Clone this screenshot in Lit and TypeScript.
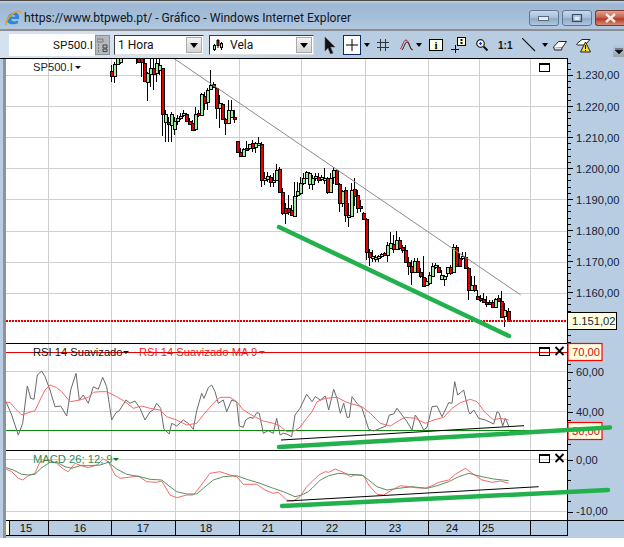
import { LitElement, html, css, svg } from "lit";
import { customElement } from "lit/decorators.js";

type C = [number, number, number, number, number, string];
// Candles measured on the reference: x, wick top, wick bottom, body top, body bottom, colour
const A: C[] = [[34,30,82,48,62,"r"],[43,20,82,28,62,"g"],[52,5,30,5,28,"g"],[61,5,25,5,22,"g"],[107,-30,28,-30,-5,"g"],[115,-30,20,-30,20,"r"],[124,-30,65,-30,22,"r"],[133,-30,75,25,78,"r"],[142,50,138,55,80,"g"],[151,-30,95,40,58,"g"],[160,-30,105,38,58,"r"],[169,-30,80,25,55,"g"],[178,-30,60,30,45,"g"],[187,40,245,40,178,"r"],[196,165,260,178,200,"g"],[205,185,260,200,208,"r"],[214,170,260,178,210,"g"],[223,185,238,198,222,"g"],[232,180,210,190,198,"g"],[241,175,195,182,190,"g"],[250,165,185,175,180,"g"],[259,175,200,178,198,"r"],[268,190,210,198,208,"r"],[277,195,228,205,225,"r"],[286,155,228,178,222,"g"],[295,165,185,175,180,"r"],[304,115,180,118,180,"g"],[313,110,165,122,145,"r"],[322,100,165,105,142,"g"],[331,45,105,90,102,"g"],[340,82,100,88,95,"r"],[349,95,190,100,158,"r"],[358,120,218,145,158,"g"],[367,145,195,148,192,"r"],[376,190,242,193,205,"r"],[385,135,208,165,205,"g"],[394,135,188,165,185,"g"],[403,165,203,185,193,"r"],[412,258,290,258,290,"r"],[421,280,302,292,302,"r"],[430,278,305,282,303,"g"],[439,258,285,278,283,"r"],[448,270,285,268,278,"g"],[457,255,290,265,278,"r"],[466,262,295,265,275,"g"],[475,245,270,265,270,"g"],[484,262,398,268,375,"r"],[493,350,390,368,374,"g"],[502,350,380,362,372,"g"],[511,360,395,365,382,"r"],[520,355,398,375,380,"g"],[529,328,375,345,375,"g"],[538,335,410,343,412,"r"],[547,400,480,412,475,"r"],[556,445,507,458,475,"r"],[565,420,480,458,470,"r"],[574,450,482,465,480,"r"],[583,380,485,422,482,"g"],[592,380,425,408,420,"g"],[601,365,420,385,415,"g"],[610,355,390,370,385,"g"],[619,348,370,352,368,"g"],[628,350,400,354,388,"g"],[637,360,405,368,388,"g"],[646,355,378,362,370,"g"],[655,355,385,365,375,"r"],[664,360,378,366,372,"g"],[673,338,385,368,372,"g"],[682,365,415,368,410,"r"],[691,355,415,368,412,"g"],[700,335,385,345,365,"g"],[709,342,390,346,388,"r"],[718,385,472,388,445,"r"],[727,405,455,408,445,"g"],[736,395,500,404,480,"r"]];
const B: C[] = [[54,100,172,135,140,"g"],[63,40,140,60,138,"g"],[72,25,110,58,78,"r"],[81,60,130,75,115,"r"],[90,90,125,108,115,"r"],[99,125,150,128,148,"r"],[108,145,270,148,245,"r"],[117,238,290,245,260,"r"],[126,240,275,258,265,"g"],[135,255,275,260,265,"g"],[144,255,275,258,265,"g"],[153,250,265,252,258,"g"],[162,245,258,250,256,"r"],[171,215,275,225,255,"g"],[180,185,235,218,235,"g"],[189,195,250,222,238,"r"],[198,183,240,210,238,"g"],[207,200,238,210,235,"r"],[216,225,248,232,240,"r"],[225,225,275,240,275,"r"],[234,260,315,275,288,"r"],[243,270,345,288,305,"r"],[252,265,310,272,305,"g"],[261,265,310,272,305,"r"],[270,295,325,306,318,"r"],[279,258,350,322,348,"r"],[288,325,350,332,345,"g"],[297,305,345,315,340,"g"],[306,280,320,288,318,"g"],[315,278,295,285,292,"g"],[324,285,310,290,305,"r"],[333,300,325,315,328,"g"],[342,315,348,318,328,"g"],[351,290,320,292,310,"g"],[360,285,315,292,308,"r"],[369,222,305,232,305,"g"],[378,225,290,232,288,"r"],[387,250,290,265,288,"r"],[396,245,270,258,265,"g"],[405,245,295,260,295,"r"],[414,290,390,295,360,"r"],[423,318,360,345,360,"g"],[432,318,365,345,360,"r"],[441,360,390,378,388,"r"],[450,375,395,385,390,"r"],[459,370,395,388,395,"r"],[468,378,410,395,402,"r"],[477,390,405,397,402,"r"],[486,390,415,397,410,"r"],[495,385,415,388,410,"g"],[504,375,395,385,392,"r"],[513,362,440,392,440,"r"],[522,400,472,420,438,"g"],[535,415,455,423,452,"r"]];

const candles: C[] = [
  ...A.map((c): C => [100 + c[0] / 3, 55 + c[1] / 3, 55 + c[2] / 3, 55 + c[3] / 3, 55 + c[4] / 3, c[5]]),
  ...B.map((c): C => [330 + c[0] / 3, 170 + c[1] / 3, 170 + c[2] / 3, 170 + c[3] / 3, 170 + c[4] / 3, c[5]]),
];

const path = (base: number, left: number[], right: number[]) => {
  const out: string[] = [];
  for (let i = 0; i < left.length; i += 2) out.push(`${(left[i] / 3).toFixed(1)},${(base + left[i + 1] / 3).toFixed(1)}`);
  for (let i = 0; i < right.length; i += 2) out.push(`${(312 + right[i] / 3).toFixed(1)},${(base + right[i + 1] / 3).toFixed(1)}`);
  return out.join(" ");
};

const rsi = path(340,
  [18,185,35,225,55,285,68,250,82,138,92,175,102,178,112,105,125,93,135,110,150,150,165,200,182,198,200,228,212,150,228,100,238,180,250,165,265,190,280,140,295,148,308,112,320,140,335,240,348,218,358,212,378,180,390,190,405,183,420,205,435,240,450,215,460,210,470,190,482,205,492,268,508,282,515,250,530,258,550,240,565,250,580,268,590,212,605,160,612,175,625,143,635,135,645,155,655,190,670,180,680,215,695,180,710,185,718,258,730,262,737,240,750,232,760,235,770,218,778,220,790,280,805,272,820,280,830,235,840,285,850,280,860,282,875,290,885,225,900,205,920,163],
  [0,185,10,170,25,180,40,168,50,210,65,148,75,175,85,220,95,190,105,232,112,232,120,170,135,190,150,205,160,235,170,268,185,273,205,265,222,258,232,225,245,222,255,205,270,225,285,245,300,270,310,225,320,240,335,270,345,262,360,200,375,198,390,230,410,188,420,190,428,125,437,165,455,150,470,215,475,222,485,210,500,235,520,240,545,252,555,215,562,220,572,258,580,235,590,258]);
const rsiMa = path(340,
  [18,187,30,187,45,205,65,225,85,218,105,212,120,180,135,150,150,135,170,143,185,155,210,185,240,180,265,172,280,157,300,155,320,155,350,170,375,185,400,205,425,198,450,205,480,210,500,230,530,240,560,255,590,250,610,225,640,190,660,172,690,172,710,185,730,210,760,228,790,243,820,250,840,258,860,275,880,275,900,262,920,235],
  [0,215,15,185,40,175,75,172,100,185,120,192,150,200,175,220,205,250,235,258,260,242,280,232,310,235,340,250,365,240,395,232,420,205,445,188,475,178,495,185,520,218,545,240,565,235,590,240]);
const macd = path(445,
  [18,72,35,80,55,100,68,105,85,92,105,85,120,50,145,45,170,55,190,72,205,80,225,55,245,62,265,68,290,60,310,42,325,50,345,90,360,100,385,97,415,93,440,110,470,112,485,108,510,150,530,158,560,150,580,150,600,125,630,85,660,80,690,90,710,95,730,118,770,118,795,135,820,145,835,142,860,165,880,168,900,155,920,125],
  [0,110,20,90,40,80,50,82,70,72,85,78,100,85,115,95,130,90,155,92,170,120,195,148,215,150,240,135,265,122,290,125,310,128,340,130,360,122,380,112,410,105,430,88,460,70,480,85,510,105,540,112,565,108,590,115]);
const macdSig = path(445,
  [18,68,40,75,65,88,85,90,105,88,125,68,150,52,170,52,195,65,215,70,240,62,270,62,300,60,325,52,350,72,380,88,420,95,450,103,485,105,510,125,530,140,560,147,590,147,610,130,640,105,670,95,710,92,740,103,780,115,820,130,850,140,885,155,905,150,925,140],
  [0,130,25,105,50,92,80,85,110,88,150,90,170,105,195,125,225,135,260,130,300,125,345,130,375,122,410,110,440,95,470,85,510,95,545,102,590,107]);

const VGRID = [48, 111, 175, 239, 301, 365, 428, 479, 530];
const PRICES: [string, number][] = [["1.230,00", 75], ["1.220,00", 106.5], ["1.210,00", 137.5], ["1.200,00", 168.5], ["1.190,00", 199.5], ["1.180,00", 231], ["1.170,00", 262], ["1.160,00", 293]];
const DATES: [string, number][] = [["15", 26], ["16", 80], ["17", 143], ["18", 206], ["21", 268], ["22", 332], ["23", 395], ["24", 452], ["25", 488]];

function ticks(from: number, to: number, start: number, step: number, major: number) {
  const out: unknown[] = [];
  const n0 = Math.ceil((from - start) / step);
  for (let n = n0; start + n * step < to; n++) {
    const y = Math.round(start + n * step) + 0.5;
    const len = ((n % major) + major) % major === 0 ? 5 : 3;
    out.push(svg`<line x1="568" x2=${568 + len} y1=${y} y2=${y} class="k"></line>`);
  }
  return out;
}

@customElement("app-root")
export class AppRoot extends LitElement {
  static styles = css`
    :host { display: block; width: 624px; height: 547px; background: #fff; overflow: hidden; font-family: "Liberation Sans", Arial, sans-serif; }
    .window { height: 538px; display: flex; flex-direction: column; background: #b8cde2; }
    .title { height: 31px; box-sizing: border-box; flex: none; display: flex; align-items: center; gap: 3px; padding: 5px 0 0 5px;
      border-top: 1px solid #4a4a4a; background: linear-gradient(#c6d3df 0, #9db7d4 3px, #a6bfda 18px, #b2c8df 100%);
      border-bottom: 2px solid #8b8f94; position: relative; }
    .title span { font: 12.15px Roboto, "Open Sans", sans-serif; color: #10161e; white-space: nowrap; }
    .ctrls { margin-left: auto; display: flex; gap: 3px; align-self: flex-start; margin-top: 4px; }
    .cb { width: 30px; height: 16px; box-sizing: border-box; border: 1px solid #5d7897; border-radius: 3px;
      background: linear-gradient(#c9d9ea, #a6bdd7 50%, #8fa9c7 55%, #b1c6dd); display: flex; align-items: center; justify-content: center; }
    .cb.close { width: 29px; border-color: #7a3b34; border-right: 0; border-radius: 3px 0 0 3px; background: linear-gradient(#e3a08f, #c65a48 50%, #b03a2a 55%, #d88a74); }
    .toolbar { height: 27px; flex: none; display: flex; align-items: stretch; padding: 2px 0 0 5px; box-sizing: border-box; border-left: 0;
      background: linear-gradient(90deg, #d5e1ee 0, #d5e1ee 200px, #b9cde2 320px); }
    .sym { width: 86px; margin: 1px 0 0 4px; height: 22px; background: #fff; font: 11.6px Roboto, sans-serif; color: #111; text-align: right; line-height: 22px; padding-right: 2px; box-sizing: border-box; }
    .symbtn { width: 15px; height: 20px; margin-top: 2px; background: #b5b9bd; border: 1px solid #8d9298; box-sizing: border-box; display: flex; align-items: center; justify-content: center; }
    .combo { height: 20px; margin: 2px 0 0 4px; border: 1px solid #3b3b3b; border-right-color: #ddd; border-bottom-color: #ddd; background: #fff; display: flex; align-items: center; box-sizing: border-box; font: 12px Roboto, sans-serif; color: #111; padding-left: 3px; gap: 7px; position: relative; }
    .combo.a { width: 90px; }
    .combo.b { width: 105px; margin-left: 5px; }
    .arrow { margin-left: auto; width: 16px; height: 16px; background: linear-gradient(#f4f4f4, #d4d4d4); border: 1px solid #aaa; box-sizing: border-box; display: flex; align-items: center; justify-content: center; margin-right: 1px; }
    .tools { display: flex; align-items: center; margin-left: 10px; height: 24px; position: relative; flex: 1; }
    .tools svg { display: block; flex: none; }
    .over { margin-left: auto; width: 11px; height: 24px; align-self: flex-start; background: linear-gradient(#b9cde2 45%, #9ea6ae); display: flex; align-items: flex-end; justify-content: center; padding-bottom: 3px; box-sizing: border-box; }
    .chart { display: block; width: 624px; height: 480px; flex: none; }
    .cross { width: 18px; height: 20px; border: 1px solid #0a2a6a; background: #fff; box-sizing: border-box; display: flex; align-items: center; justify-content: center; margin: 0 3px 0 8px; }
    .info { width: 14px; height: 12px; background: #ffffe1; border: 1px solid #000; box-sizing: border-box; font: bold 11px/10px "Liberation Serif", serif; text-align: center; color: #000; margin: 0 8px 0 7px; }
    .one { font: bold 10px "Liberation Sans", sans-serif; color: #111; margin: 0 10px 0 10px; }
    .ml3 { margin-left: 3px; } .ml5 { margin-left: 5px; } .ml6 { margin-left: 6px; } .ml7 { margin-left: 7px; } .ml9 { margin-left: 9px; } .ml10 { margin-left: 10px; } .ml11 { margin-left: 11px; }
    .k { stroke: #000; stroke-width: 1; shape-rendering: crispEdges; }
    .g { stroke: #cfcfcf; stroke-width: 1; shape-rendering: crispEdges; }
    .lbl { font: 11.2px "Liberation Sans", Arial, sans-serif; fill: #15233a; }
    .hdr { font: 11.2px "Liberation Sans", Arial, sans-serif; }
    .trend { stroke-width: 4.500; stroke: #22b14c; stroke-linecap: round; fill: none; }
    .crv { fill: none; stroke-width: 1; }
  `;

  private gridV(y1: number, y2: number) {
    return VGRID.map((x) => svg`<line class="g" x1=${x + 0.5} x2=${x + 0.5} y1=${y1} y2=${y2}></line>`);
  }
  private gridH(ys: number[]) {
    return ys.map((y) => svg`<line class="g" x1="6" x2="567" y1=${y + 0.5} y2=${y + 0.5}></line>`);
  }
  private winBox(y: number) {
    return svg`<rect x="539.5" y=${y + 0.5} width="10" height="8" fill="none" stroke="#000" shape-rendering="crispEdges"></rect>
      <line x1="539" x2="550" y1=${y + 1.5} y2=${y + 1.5} class="k"></line>`;
  }
  private closeX(y: number) {
    return svg`<path d="M555.5 ${y} l8 8 M563.5 ${y} l-8 8" stroke="#000" stroke-width="1.8" fill="none"></path>`;
  }
  private candles() {
    return candles.map(([x, wt, wb, bt, bb, col]) => {
      const cx = Math.round(x);
      const t = Math.round(bt);
      const h = Math.max(2, Math.round(bb) - t);
      return svg`<rect x=${cx} y=${Math.round(wt)} width="1" height=${Math.max(1, Math.round(wb - wt))} fill="#000"></rect>
        <rect x=${cx - 1} y=${t} width="4" height=${h + 1} fill="#000"></rect>
        <rect x=${cx} y=${t + 1} width="2" height=${h - 1} fill=${col === "r" ? "#e80000" : "#9bec9b"}></rect>`;
    });
  }

  render() {
    return html`<div class="window">
      <div class="title">
        <svg width="16" height="16" viewBox="0 0 16 16">
          <path d="M2 10.500C2 5 6.500 2 10.500 2.500c3.500.5 4 4.500 3.500 6.500H6.200c.2 2.800 4 3.300 6.800 1.200v3C8 15.500 2 14 2 10.500z M6.200 6.700h4.200C10.200 4.300 6.800 4.300 6.200 6.700z" fill="#2b86dc" fill-rule="evenodd"></path>
          <path d="M1.200 15C-.5 12.500 5 4 11 1.800c3-1 4.800-1 4.400 1.500" fill="none" stroke="#e6a21e" stroke-width="1.600"></path>
        </svg>
        <span>https://www.btpweb.pt/ - Gráfico - Windows Internet Explorer</span>
        <div class="ctrls">
          <div class="cb"><svg width="12" height="6"><rect x=".5" y="1.5" width="10" height="4" fill="#e4ebf3" stroke="#5a6b80"></rect></svg></div>
          <div class="cb"><svg width="12" height="9"><rect x="1.5" y=".5" width="9" height="7" fill="none" stroke="#3e5068" stroke-width="1.2"></rect><rect x="3.5" y="3" width="5" height="3" fill="#e4ebf3"></rect></svg></div>
          <div class="cb close"><svg width="13" height="10"><path d="M2 1l9 8M11 1L2 9" stroke="#f2ecea" stroke-width="2.4"></path></svg></div>
        </div>
      </div>
      <div class="toolbar">
        <div class="sym">SP500.I</div>
        <div class="symbtn"><svg width="11" height="14" viewBox="0 0 11 14"><path d="M0 1h6v3H0z" fill="none" stroke="#777"></path><path d="M1 7h1M1 10h1M1 13h1M6 7h4v3H6zM6 11h4v2.5H6z" fill="none" stroke="#444"></path></svg></div>
        <div class="combo a">1 Hora<div class="arrow"><svg width="8" height="5"><path d="M0 0h8L4 5z" fill="#000"></path></svg></div></div>
        <div class="combo b">
          <svg width="10" height="13" viewBox="0 0 10 13"><path d="M1.500 5v7M5 0v9M8.500 3v8" stroke="#000"></path><rect x=".5" y="6.500" width="2" height="4" fill="#9bec9b" stroke="#000"></rect><rect x="4" y="1.500" width="2" height="5" fill="#e80000" stroke="#000"></rect><rect x="7.500" y="4.500" width="2" height="4" fill="#9bec9b" stroke="#000"></rect></svg>
          <span>Vela</span><div class="arrow"><svg width="8" height="5"><path d="M0 0h8L4 5z" fill="#000"></path></svg></div>
        </div>
        <div class="tools">
          <svg width="11" height="17" viewBox="0 0 11 17"><path d="M1 0v14l3-3 2.500 6 2.500-1-2.500-6H11z" fill="#111" stroke="#555" stroke-width=".6"></path></svg>
          <div class="cross"><svg width="12" height="12"><path d="M6 0v12M0 6h12" stroke="#000"></path></svg></div>
          <svg width="6" height="4"><path d="M0 0h6L3 4z" fill="#000"></path></svg>
          <svg class="ml7" width="12" height="12" viewBox="0 0 12 12"><path d="M3.500 0v12M8.500 0v12M0 3.500h12M0 8.500h12" stroke="#333"></path></svg>
          <svg class="ml11" width="13" height="12" viewBox="0 0 13 12"><path d="M0 10C2 10 3 1 6 1s3 9 7 10" fill="none" stroke="#c01818"></path><path d="M2 11C4 9 5 3 7 3s3 6 5 8" fill="none" stroke="#222"></path></svg>
          <svg class="ml3" width="6" height="4"><path d="M0 0h6L3 4z" fill="#000"></path></svg>
          <div class="info">i</div>
          <svg width="15" height="17" viewBox="0 0 15 17"><path d="M0 12.500h8M4.500 8v8" stroke="#000"></path><rect x="6.500" y=".5" width="8" height="8" fill="#ffffe1" stroke="#000"></rect><rect x="9.500" y="2" width="2" height="2" fill="#000"></rect><rect x="9.500" y="5" width="2" height="2" fill="#000"></rect></svg>
          <svg class="ml10" width="12" height="13" viewBox="0 0 12 13"><circle cx="4.500" cy="4.500" r="3.800" fill="#eef3fb" stroke="#222" stroke-width="1.200"></circle><path d="M3 4.500h3M4.500 3v3" stroke="#2030d0" stroke-width="1.100"></path><path d="M7.500 7.500l4 4" stroke="#111" stroke-width="2"></path></svg>
          <span class="one">1:1</span>
          <svg width="14" height="14"><path d="M0 0l13 13" stroke="#111" stroke-width="1.100"></path></svg>
          <svg class="ml6" width="6" height="4"><path d="M0 0h6L3 4z" fill="#000"></path></svg>
          <svg class="ml5" width="14" height="11" viewBox="0 0 14 11"><path d="M.5 7L5.500 1.500h8L9 8H1.500z" fill="#fff" stroke="#222"></path><path d="M.5 7l1 3H8.500L9 8" fill="#ddd" stroke="#222"></path></svg>
          <svg class="ml9" width="15" height="15" viewBox="0 0 15 15"><path d="M.5 6L6 1.500h8L9 7H1.500z" fill="#fff" stroke="#222"></path><path d="M9.500 4l5 10H4.500z" fill="#f6dc3c" stroke="#222"></path><path d="M9.500 7v4M9.500 12v1" stroke="#000"></path></svg>
          <div class="over"><svg width="8" height="6"><path d="M0 0h8M0 2h8L4 6z" stroke="#222" stroke-width=".8" fill="#111"></path></svg></div>
        </div>
      </div>
      <svg class="chart" viewBox="0 58 624 480" xmlns="http://www.w3.org/2000/svg">
        <defs>
          <clipPath id="p1"><rect x="6" y="59" width="561" height="284"></rect></clipPath>
        </defs>
        <rect x="0" y="58" width="624" height="480" fill="#b8cde2"></rect>
        <rect x="3" y="58" width="3" height="480" fill="#8f949a"></rect>
        <rect x="6" y="58" width="562" height="462" fill="#fff"></rect>

        ${this.gridV(59, 520)}
        ${this.gridH(PRICES.map((p) => Math.floor(p[1])))}
        ${this.gridH([371, 411, 459, 511])}

        <g clip-path="url(#p1)">${this.candles()}</g>
        <line x1="174" y1="58.500" x2="520.700" y2="295" stroke="#8a8a8a"></line>
        <line x1="6" x2="567" y1="321" y2="321" stroke="#e60000" stroke-width="2" stroke-dasharray="2 1"></line>

        <line x1="6" x2="567" y1="352.500" y2="352.500" stroke="#e80000" stroke-width="1.200"></line>
        <line x1="6" x2="567" y1="430.500" y2="430.500" stroke="#0a8a0a" stroke-width="1.200"></line>
        <polyline class="crv" points=${rsi} stroke="#6a6a6a"></polyline>
        <polyline class="crv" points=${rsiMa} stroke="#f46a6a"></polyline>
        <polyline class="crv" points=${macd} stroke="#f46a6a"></polyline>
        <polyline class="crv" points=${macdSig} stroke="#5f8f5f"></polyline>
        <line x1="281" y1="440" x2="524" y2="425.700" stroke="#000"></line>
        <line x1="286.700" y1="501" x2="538.700" y2="486.700" stroke="#000"></line>

        <line class="k" x1="0" x2="568" y1="58.500" y2="58.500"></line>
        <line class="k" x1="6" x2="568" y1="343.500" y2="343.500"></line>
        <line class="k" x1="6" x2="568" y1="450.500" y2="450.500"></line>
        <line class="k" x1="6" x2="624" y1="520.500" y2="520.500"></line>
        <line class="k" x1="6" x2="568" y1="535.500" y2="535.500"></line>
        <line class="k" x1="567.500" x2="567.500" y1="58" y2="536"></line>

        ${ticks(60, 343, 75, 6.2, 5)}
        ${ticks(344, 450, 372, 8, 5)}
        ${ticks(451, 520, 459.5, 10.4, 5)}

        ${PRICES.map(([t, y]) => svg`<text class="lbl" x="576" y=${y + 4}>${t}</text>`)}
        <rect x="567.500" y="312.500" width="49" height="17" fill="#ffffe1" stroke="#000"></rect>
        <text class="lbl" x="572" y="325">1.151,02</text>

        <rect x="568" y="343.500" width="34" height="17" fill="#ffffe1" stroke="#f00" stroke-width="1.200"></rect>
        <text class="lbl" x="572" y="356" style="fill:#d01010">70,00</text>
        <text class="lbl" x="576" y="376">60,00</text>
        <text class="lbl" x="576" y="416">40,00</text>
        <rect x="568" y="422.500" width="34" height="17" fill="#ffffe1" stroke="#f00" stroke-width="1.200"></rect>
        <text class="lbl" x="572" y="435" style="fill:#d01010">30,00</text>
        <text class="lbl" x="576" y="463.500">0,00</text>
        <text class="lbl" x="576" y="515">-10,00</text>

        <text class="hdr" x="33" y="71" fill="#1a2438">SP500.I</text>
        <path d="M75 66h6l-3 3z" fill="#111"></path>
        <text class="hdr" x="33" y="356" fill="#111">RSI 14 Suavizado</text>
        <path d="M123 351h6l-3 3z" fill="#111"></path>
        <text class="hdr" x="139" y="356" fill="#f01818">RSI 14 Suavizado MA 9</text>
        <path d="M259 351h6l-3 3z" fill="#f01818"></path>
        <text class="hdr" x="33" y="463" fill="#2f8a5a">MACD 26; 12; 9</text>
        <path d="M113 458h6l-3 3z" fill="#0a7a20"></path>

        ${this.winBox(62.5)}
        ${this.winBox(347)}
        ${this.closeX(347)}
        ${this.winBox(454)}
        ${this.closeX(454)}

        <rect x="6" y="521" width="3" height="14" fill="#ffffe1"></rect>
        <line class="k" x1="9.500" x2="9.500" y1="520" y2="535"></line>
        ${VGRID.map((x) => svg`<line class="k" x1=${x + 0.5} x2=${x + 0.5} y1="520" y2="535"></line>`)}
        ${DATES.map(([t, x]) => svg`<text class="lbl" x=${x} y="532" text-anchor="middle" style="fill:#111">${t}</text>`)}

        <line class="trend" x1="279" y1="227" x2="509" y2="336"></line>
        <line class="trend" x1="279" y1="447" x2="610" y2="427.500"></line>
        <line class="trend" x1="282" y1="506" x2="608" y2="490"></line>
      </svg>
    </div>`;
  }
}
